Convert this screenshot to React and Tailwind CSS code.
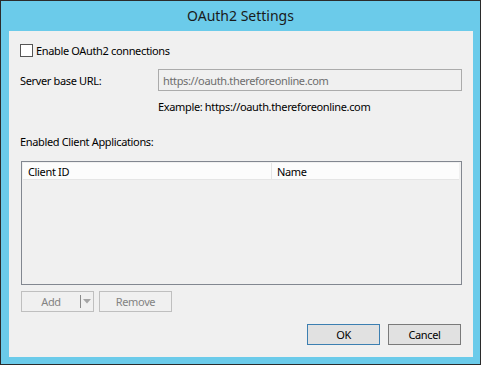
const FONT = 'font-["Segoe_UI","Noto_Sans",sans-serif]'

function Checkbox() {
  return <span className="block w-[13px] h-[13px] border border-[#555] bg-white" />
}

function SplitButton() {
  return (
    <div className="w-[73px] h-[21px] border border-[#bfbfbf] bg-[#f0f0f0] flex items-center">
      <span className="w-[58px] text-center text-[#838383]">Add</span>
      <span className="w-px h-[13px] bg-[#8a8a8a]" />
      <span className="flex-1 flex justify-center">
        <svg width="8" height="5" viewBox="0 0 8 5">
          <path d="M0 0h8L4 4.5z" fill="#a5a5a5" />
        </svg>
      </span>
    </div>
  )
}

export default function App() {
  return (
    <div className={`w-[481px] h-[367px] bg-white text-[11px] tracking-[-0.35px] leading-none text-black ${FONT}`}>
      <div className="w-[481px] h-[365px] border border-[#2b2b2b] bg-[#6bcbea] flex flex-col">
        {/* Title bar */}
        <div className="h-[30px] flex items-center justify-center text-[14px] tracking-normal text-[#1a1a1a]">
          OAuth2 Settings
        </div>

        {/* Client area */}
        <div className="ml-[8px] mr-[7px] h-[326px] bg-[#f0f0f0]">
          <div className="pt-[13px] pl-[11px] flex items-center gap-[3px]">
            <Checkbox />
            <span>Enable OAuth2 connections</span>
          </div>

          <div className="mt-[12px] pl-[11px] flex items-center">
            <span className="w-[138px]">Server base URL:</span>
            <div className="w-[304px] h-[22px] border border-[#ababab] flex items-center pl-[4px] text-[#6d6d6d]">
              https://oauth.thereforeonline.com
            </div>
          </div>

          <div className="mt-[9px] pl-[149px] h-[12px] flex items-center">
            Example: https://oauth.thereforeonline.com
          </div>

          <div className="mt-[23px] pl-[11px] h-[12px] flex items-center">
            Enabled Client Applications:
          </div>

          {/* List view */}
          <div className="mt-[14px] ml-[12px] w-[441px] h-[124px] border border-[#828790] p-px">
            <div className="flex h-[17px] bg-[#fcfcfc] border-b border-[#e5e5e5] mr-px">
              <div className="w-[249px] border-r border-[#e5e5e5] pl-[5px] flex items-center">Client ID</div>
              <div className="flex-1 pl-[5px] flex items-center">Name</div>
            </div>
          </div>

          <div className="mt-[6px] ml-[12px] flex gap-[5px]">
            <SplitButton />
            <div className="w-[73px] h-[21px] border border-[#bfbfbf] bg-[#f0f0f0] flex items-center justify-center text-[#838383]">
              Remove
            </div>
          </div>

          <div className="mt-[12px] flex justify-end gap-[8px] pr-[12px]">
            <div className="w-[73px] h-[21px] border border-[#3c7fb1] bg-[#e1e1e1] flex items-center justify-center">OK</div>
            <div className="w-[73px] h-[21px] border border-[#7a7a7a] bg-[#e1e1e1] flex items-center justify-center">Cancel</div>
          </div>
        </div>
      </div>
    </div>
  )
}
